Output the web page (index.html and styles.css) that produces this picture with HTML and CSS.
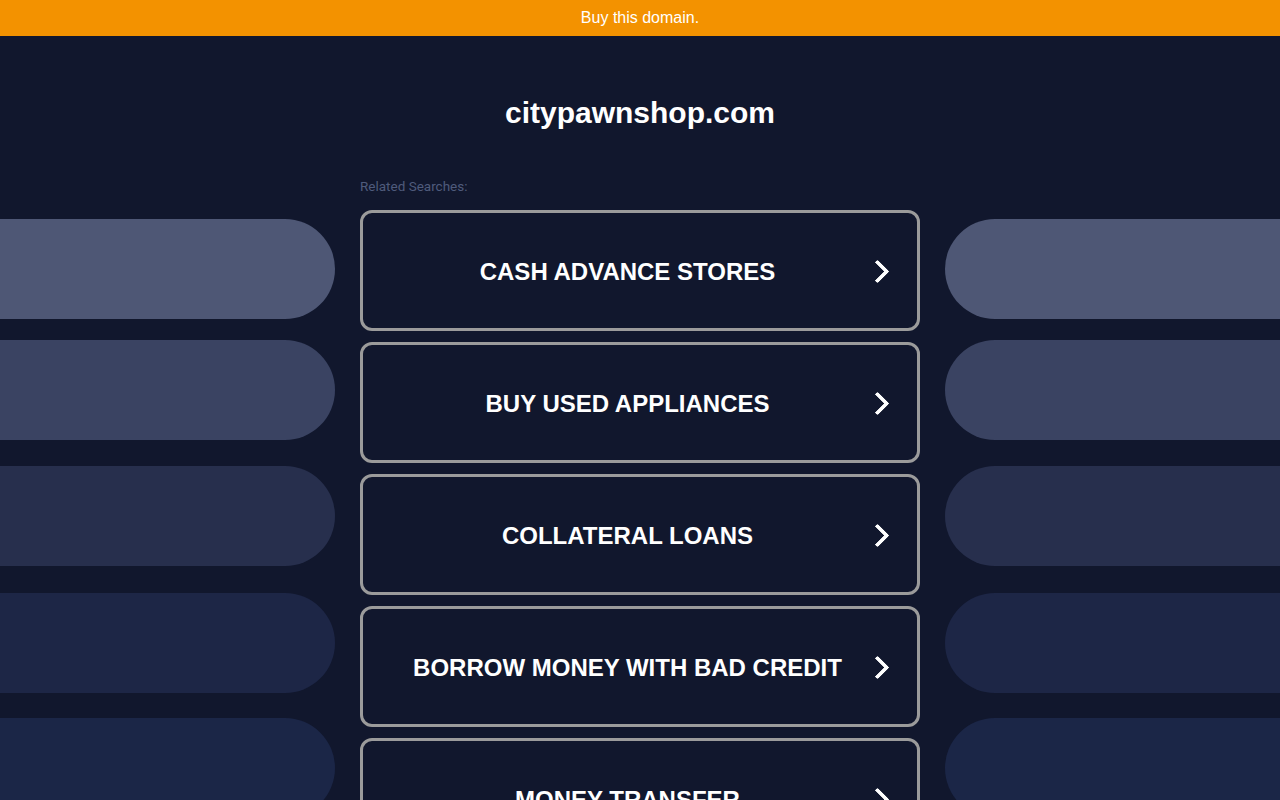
FILE: index.html
```html
<!DOCTYPE html>
<html lang="en">
<head>
    <meta charset="UTF-8">
    <title>citypawnshop.com</title>
    <link rel="stylesheet" href="styles.css">
</head>
<body>

    <div class="topbar">
        <a href="#" class="buy-link">Buy this domain.</a>
    </div>

    <h1 class="domain">citypawnshop.com</h1>

    <div class="layout">
        <div class="side side-left">
            <div class="pill pill-1"></div>
            <div class="pill pill-2"></div>
            <div class="pill pill-3"></div>
            <div class="pill pill-4"></div>
            <div class="pill pill-5"></div>
        </div>

        <div class="results">
            <p class="related">Related Searches:</p>
            <a href="#" class="result"><span>CASH ADVANCE STORES</span></a>
            <a href="#" class="result"><span>BUY USED APPLIANCES</span></a>
            <a href="#" class="result"><span>COLLATERAL LOANS</span></a>
            <a href="#" class="result"><span>BORROW MONEY WITH BAD CREDIT</span></a>
            <a href="#" class="result"><span>MONEY TRANSFER</span></a>
        </div>

        <div class="side side-right">
            <div class="pill pill-1"></div>
            <div class="pill pill-2"></div>
            <div class="pill pill-3"></div>
            <div class="pill pill-4"></div>
            <div class="pill pill-5"></div>
        </div>
    </div>

</body>
</html>
```

FILE: styles.css
```css
body {
    margin: 0;
    background-color: #11172d;
    font-family: "Liberation Sans", Arial, sans-serif;
    color: #fff;
    overflow: hidden;
}
.topbar {
    height: 36px;
    background-color: #f39200;
    display: flex;
    align-items: center;
    justify-content: center;
}
.buy-link {
    color: #fff;
    font-size: 16px;
    text-decoration: none;
}
.domain {
    margin: 0;
    padding-top: 59px;
    height: 36px;
    line-height: 36px;
    text-align: center;
    font-size: 30px;
    font-weight: bold;
}
.layout {
    display: grid;
    grid-template-columns: 1fr 560px 1fr;
    column-gap: 25px;
    margin-top: 47px;
}
.side {
    display: flex;
    flex-direction: column;
    gap: 25px;
    padding-top: 41px;
}
.pill {
    height: 100px;
}
.side-left .pill {
    border-radius: 0 50px 50px 0;
}
.side-right .pill {
    border-radius: 50px 0 0 50px;
}
.pill-1 { background-color: #4e5775; }
.pill-2 { background-color: #3a4362; margin-top: -4px; }
.pill-3 { background-color: #272f4d; margin-top: 1px; }
.pill-4 { background-color: #1d2646; margin-top: 2px; }
.pill-5 { background-color: #1b2647; }
.results {
    display: flex;
    flex-direction: column;
    gap: 11px;
}
.related {
    margin: 0 0 5px;
    height: 16px;
    line-height: 16px;
    font-family: Roboto, "Liberation Sans", sans-serif;
    font-size: 13.5px;
    color: #4f5b7c;
}
.result {
    position: relative;
    height: 113px;
    border: 3px solid #9b9b9b;
    border-radius: 12px;
    display: flex;
    align-items: center;
    justify-content: center;
    padding-top: 2px;
    padding-right: 25px;
    color: #fff;
    text-decoration: none;
    font-size: 24px;
    font-weight: bold;
}
.result::after {
    content: "";
    position: absolute;
    right: 31px;
    top: 50%;
    width: 13px;
    height: 13px;
    margin-top: -8px;
    border-top: 4px solid #fff;
    border-right: 4px solid #fff;
    border-radius: 2px;
    transform: rotate(45deg);
}
```
